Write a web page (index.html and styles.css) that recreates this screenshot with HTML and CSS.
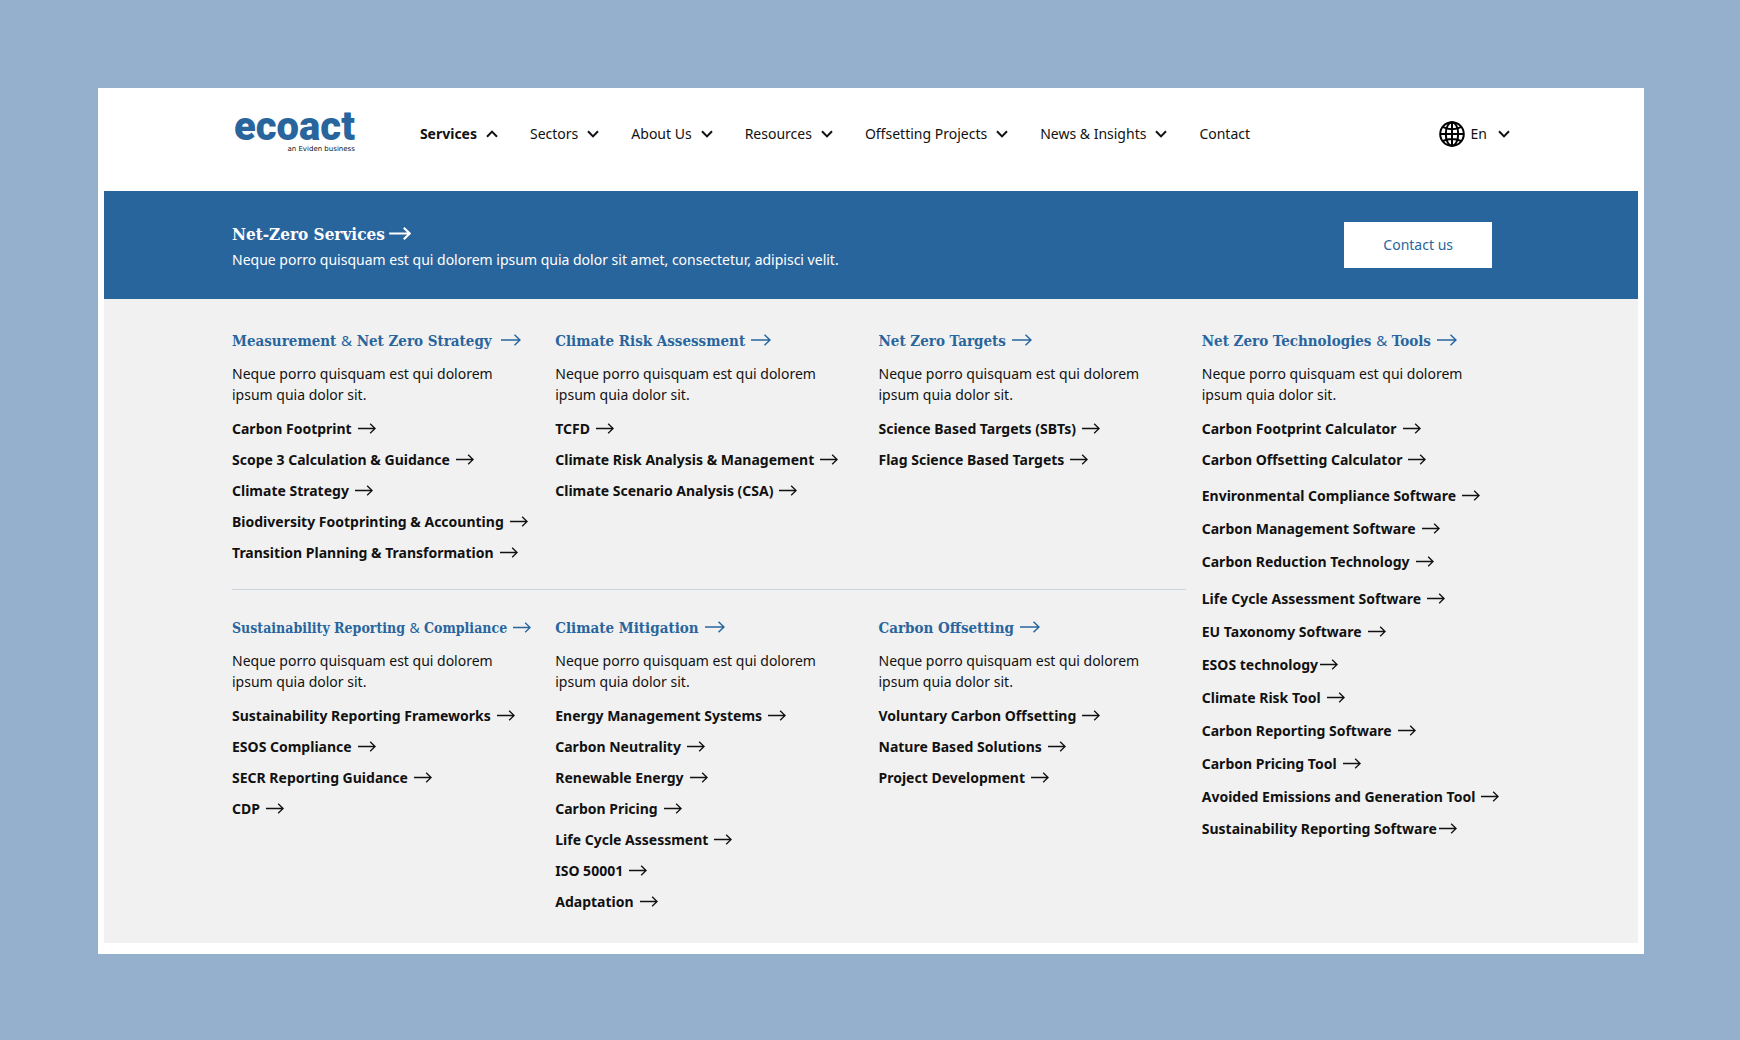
FILE: index.html
```html
<!DOCTYPE html>
<html lang="en">
<head>
<meta charset="utf-8">
<meta name="viewport" content="width=device-width, initial-scale=1">
<title>ecoact – Net-Zero Services</title>
<link rel="stylesheet" href="styles.css">
</head>
<body>
<svg class="sprite" aria-hidden="true">
  <symbol id="arrow" viewBox="0 0 20 12"><path d="M0 6h19M13.5 .7 19 6l-5.500 5.300"/></symbol>
  <symbol id="chevron" viewBox="0 0 12 8"><path d="M1 1.300 6 6.400l5-5.100"/></symbol>
  <symbol id="chevron-up" viewBox="0 0 12 8"><path d="M1 6.700 6 1.600l5 5.100"/></symbol>
  <symbol id="globe" viewBox="0 0 26 26"><circle cx="13" cy="13" r="11.800"/><ellipse cx="13" cy="13" rx="6.200" ry="11.800"/><path d="M13 1v24M1 13h24M3.700 5.800C8.800 8.900 17.200 8.900 22.300 5.800M3.700 20.200c5.100-3.100 13.500-3.100 18.600 0"/></symbol>
</svg>

<div class="card">
  <header class="header">
    <a class="logo" href="#"><span class="logo-name">ecoact</span><span class="logo-tag">an Eviden business</span></a>
    <nav class="nav" aria-label="Main">
      <button class="nav-item nav-item-open" type="button" aria-expanded="true">Services<svg class="chevron" aria-hidden="true"><use href="#chevron-up"/></svg></button>
      <button class="nav-item" type="button">Sectors<svg class="chevron" aria-hidden="true"><use href="#chevron"/></svg></button>
      <button class="nav-item" type="button">About Us<svg class="chevron" aria-hidden="true"><use href="#chevron"/></svg></button>
      <button class="nav-item" type="button">Resources<svg class="chevron" aria-hidden="true"><use href="#chevron"/></svg></button>
      <button class="nav-item" type="button">Offsetting Projects<svg class="chevron" aria-hidden="true"><use href="#chevron"/></svg></button>
      <button class="nav-item" type="button">News &amp; Insights<svg class="chevron" aria-hidden="true"><use href="#chevron"/></svg></button>
      <a class="nav-item" href="#">Contact</a>
    </nav>
    <button class="language" type="button"><svg class="globe" aria-hidden="true"><use href="#globe"/></svg>En<svg class="chevron" aria-hidden="true"><use href="#chevron"/></svg></button>
  </header>

  <section class="banner">
    <div>
      <h1 class="banner-title"><a href="#">Net-Zero Services<svg class="arrow arrow-banner" aria-hidden="true"><use href="#arrow"/></svg></a></h1>
      <p class="banner-text">Neque porro quisquam est qui dolorem ipsum quia dolor sit amet, consectetur, adipisci velit.</p>
    </div>
    <button class="contact" type="button">Contact us</button>
  </section>

  <main class="menu">
    <section class="group">
      <h2 class="title title-wide"><a href="#">Measurement <span class="amp">&amp;</span> Net Zero Strategy<svg class="arrow" aria-hidden="true"><use href="#arrow"/></svg></a></h2>
      <p class="intro">Neque porro quisquam est qui dolorem ipsum quia dolor sit.</p>
      <ul class="links">
        <li><a href="#">Carbon Footprint<svg class="arrow" aria-hidden="true"><use href="#arrow"/></svg></a></li>
        <li><a href="#">Scope 3 Calculation &amp; Guidance<svg class="arrow" aria-hidden="true"><use href="#arrow"/></svg></a></li>
        <li><a href="#">Climate Strategy<svg class="arrow" aria-hidden="true"><use href="#arrow"/></svg></a></li>
        <li><a href="#">Biodiversity Footprinting &amp; Accounting<svg class="arrow" aria-hidden="true"><use href="#arrow"/></svg></a></li>
        <li><a href="#">Transition Planning &amp; Transformation<svg class="arrow" aria-hidden="true"><use href="#arrow"/></svg></a></li>
      </ul>
    </section>

    <section class="group">
      <h2 class="title"><a href="#">Climate Risk Assessment<svg class="arrow" aria-hidden="true"><use href="#arrow"/></svg></a></h2>
      <p class="intro">Neque porro quisquam est qui dolorem ipsum quia dolor sit.</p>
      <ul class="links">
        <li><a href="#">TCFD<svg class="arrow" aria-hidden="true"><use href="#arrow"/></svg></a></li>
        <li><a href="#">Climate Risk Analysis &amp; Management<svg class="arrow" aria-hidden="true"><use href="#arrow"/></svg></a></li>
        <li><a href="#">Climate Scenario Analysis (CSA)<svg class="arrow" aria-hidden="true"><use href="#arrow"/></svg></a></li>
      </ul>
    </section>

    <section class="group">
      <h2 class="title"><a href="#">Net Zero Targets<svg class="arrow" aria-hidden="true"><use href="#arrow"/></svg></a></h2>
      <p class="intro">Neque porro quisquam est qui dolorem ipsum quia dolor sit.</p>
      <ul class="links">
        <li><a href="#">Science Based Targets (SBTs)<svg class="arrow" aria-hidden="true"><use href="#arrow"/></svg></a></li>
        <li><a href="#">Flag Science Based Targets<svg class="arrow" aria-hidden="true"><use href="#arrow"/></svg></a></li>
      </ul>
    </section>

    <section class="group group-tall">
      <h2 class="title"><a href="#">Net Zero Technologies <span class="amp">&amp;</span> Tools<svg class="arrow" aria-hidden="true"><use href="#arrow"/></svg></a></h2>
      <p class="intro">Neque porro quisquam est qui dolorem ipsum quia dolor sit.</p>
      <ul class="links">
        <li><a href="#">Carbon Footprint Calculator<svg class="arrow" aria-hidden="true"><use href="#arrow"/></svg></a></li>
        <li><a href="#">Carbon Offsetting Calculator<svg class="arrow" aria-hidden="true"><use href="#arrow"/></svg></a></li>
      </ul>
      <ul class="links links-loose">
        <li><a href="#">Environmental Compliance Software<svg class="arrow" aria-hidden="true"><use href="#arrow"/></svg></a></li>
        <li><a href="#">Carbon Management Software<svg class="arrow" aria-hidden="true"><use href="#arrow"/></svg></a></li>
        <li><a href="#">Carbon Reduction Technology<svg class="arrow" aria-hidden="true"><use href="#arrow"/></svg></a></li>
      </ul>
      <ul class="links links-loose">
        <li><a href="#">Life Cycle Assessment Software<svg class="arrow" aria-hidden="true"><use href="#arrow"/></svg></a></li>
        <li><a href="#">EU Taxonomy Software<svg class="arrow" aria-hidden="true"><use href="#arrow"/></svg></a></li>
        <li><a class="tight" href="#">ESOS technology<svg class="arrow" aria-hidden="true"><use href="#arrow"/></svg></a></li>
        <li><a href="#">Climate Risk Tool<svg class="arrow" aria-hidden="true"><use href="#arrow"/></svg></a></li>
        <li><a href="#">Carbon Reporting Software<svg class="arrow" aria-hidden="true"><use href="#arrow"/></svg></a></li>
        <li><a href="#">Carbon Pricing Tool<svg class="arrow" aria-hidden="true"><use href="#arrow"/></svg></a></li>
        <li><a href="#">Avoided Emissions and Generation Tool<svg class="arrow" aria-hidden="true"><use href="#arrow"/></svg></a></li>
      </ul>
      <ul class="links">
        <li><a class="tight" href="#">Sustainability Reporting Software<svg class="arrow" aria-hidden="true"><use href="#arrow"/></svg></a></li>
      </ul>
    </section>

    <hr class="divider">

    <section class="group">
      <h2 class="title title-small"><a href="#">Sustainability Reporting <span class="amp">&amp;</span> Compliance<svg class="arrow" aria-hidden="true"><use href="#arrow"/></svg></a></h2>
      <p class="intro">Neque porro quisquam est qui dolorem ipsum quia dolor sit.</p>
      <ul class="links">
        <li><a href="#">Sustainability Reporting Frameworks<svg class="arrow" aria-hidden="true"><use href="#arrow"/></svg></a></li>
        <li><a href="#">ESOS Compliance<svg class="arrow" aria-hidden="true"><use href="#arrow"/></svg></a></li>
        <li><a href="#">SECR Reporting Guidance<svg class="arrow" aria-hidden="true"><use href="#arrow"/></svg></a></li>
        <li><a href="#">CDP<svg class="arrow" aria-hidden="true"><use href="#arrow"/></svg></a></li>
      </ul>
    </section>

    <section class="group">
      <h2 class="title"><a href="#">Climate Mitigation<svg class="arrow" aria-hidden="true"><use href="#arrow"/></svg></a></h2>
      <p class="intro">Neque porro quisquam est qui dolorem ipsum quia dolor sit.</p>
      <ul class="links">
        <li><a href="#">Energy Management Systems<svg class="arrow" aria-hidden="true"><use href="#arrow"/></svg></a></li>
        <li><a href="#">Carbon Neutrality<svg class="arrow" aria-hidden="true"><use href="#arrow"/></svg></a></li>
        <li><a href="#">Renewable Energy<svg class="arrow" aria-hidden="true"><use href="#arrow"/></svg></a></li>
        <li><a href="#">Carbon Pricing<svg class="arrow" aria-hidden="true"><use href="#arrow"/></svg></a></li>
        <li><a href="#">Life Cycle Assessment<svg class="arrow" aria-hidden="true"><use href="#arrow"/></svg></a></li>
        <li><a href="#">ISO 50001<svg class="arrow" aria-hidden="true"><use href="#arrow"/></svg></a></li>
        <li><a href="#">Adaptation<svg class="arrow" aria-hidden="true"><use href="#arrow"/></svg></a></li>
      </ul>
    </section>

    <section class="group">
      <h2 class="title"><a href="#">Carbon Offsetting<svg class="arrow" aria-hidden="true"><use href="#arrow"/></svg></a></h2>
      <p class="intro">Neque porro quisquam est qui dolorem ipsum quia dolor sit.</p>
      <ul class="links">
        <li><a href="#">Voluntary Carbon Offsetting<svg class="arrow" aria-hidden="true"><use href="#arrow"/></svg></a></li>
        <li><a href="#">Nature Based Solutions<svg class="arrow" aria-hidden="true"><use href="#arrow"/></svg></a></li>
        <li><a href="#">Project Development<svg class="arrow" aria-hidden="true"><use href="#arrow"/></svg></a></li>
      </ul>
    </section>
  </main>
</div>
</body>
</html>
```

FILE: styles.css
```css
:root {
  --blue: #29659d;
  --ink: #111;
  --sans: "Noto Sans", "Open Sans", sans-serif;
  --slab: "DejaVu Serif Condensed", "DejaVu Serif", serif;
}

* { box-sizing: border-box; }

body {
  margin: 0;
  padding: 88px 96px 86px 98px;
  background: #94b0cd;
  color: var(--ink);
  font: 14px/21px var(--sans);
}

h1, h2, p, ul { margin: 0; padding: 0; font-size: inherit; }
ul { list-style: none; }
a { color: inherit; text-decoration: none; }
button {
  padding: 0;
  border: 0;
  background: none;
  color: inherit;
  font: inherit;
  cursor: pointer;
}
.sprite { display: none; }

.card { padding: 0 6px 11px; background: #fff; }

/* Header */
.header {
  display: flex;
  align-items: center;
  min-height: 103px;
  padding: 0 128px 12px 130px;
}
.logo {
  display: flex;
  flex-direction: column;
  align-items: flex-end;
  margin-right: 65px;
  padding-bottom: 4px;
}
.logo-name {
  color: var(--blue);
  font: 900 40px/34px Roboto, sans-serif;
}
.logo-tag { font: 7px/10px "DejaVu Sans", sans-serif; }
.nav { display: flex; flex: 1; gap: 32px; }
.nav-item { display: flex; align-items: center; gap: 9px; white-space: nowrap; }
.nav-item-open { font-weight: 700; }
.chevron {
  width: 12px;
  height: 8px;
  fill: none;
  stroke: currentColor;
  stroke-width: 2;
}
.language { display: flex; align-items: center; gap: 6px; }
.language .chevron { margin-left: 5px; }
.globe {
  width: 26px;
  height: 26px;
  fill: none;
  stroke: #000;
  stroke-width: 2;
}

/* Shared arrow */
.arrow {
  width: 18px;
  height: 11px;
  fill: none;
  stroke: currentColor;
  stroke-width: 1.5;
  flex: none;
}

/* Banner */
.banner {
  display: flex;
  align-items: center;
  justify-content: space-between;
  min-height: 108px;
  padding: 0 146px 0 128px;
  background: var(--blue);
  color: #fff;
}
.banner-title { font: 700 17px/26px var(--slab); }
.arrow-banner { width: 22px; height: 13px; margin-left: 4px; stroke-width: 2; }
.banner-text { margin-top: 2px; }
.contact {
  padding: 12px 39px 13px;
  background: #fff;
  color: var(--blue);
}

/* Mega menu */
.menu {
  display: grid;
  grid-template-columns: repeat(4, 1fr);
  padding: 30px 113px 26px 128px;
  background: #f1f1f1;
}
.group-tall { grid-row: 1 / span 3; grid-column: 4; }
.divider {
  grid-column: 1 / span 3;
  width: auto;
  height: 1px;
  margin: 21px 16px 26px 0;
  border: 0;
  background: #cbd6e0;
}
.title {
  color: var(--blue);
  font: 700 15px/24px var(--slab);
  white-space: nowrap;
}
.title a { display: block; height: 24px; }
.title .arrow { width: 20px; height: 12px; margin-left: 6px; }
.title-wide .arrow { margin-left: 9px; }
.title-small { font-size: 14px; }
.title-small .arrow { width: 18px; height: 11px; }
.amp { font-family: var(--sans); font-weight: 400; line-height: 1; }
.intro { max-width: 290px; margin-top: 10px; }
.links { margin-top: 8px; font-weight: 700; white-space: nowrap; }
.links + .links { margin-top: 4px; }
.links a { display: flex; align-items: center; gap: 6px; min-height: 31px; }
.links-loose a { min-height: 33px; }
.links + .links:last-child { margin-top: 0; }
.links .tight { gap: 2px; }
```
